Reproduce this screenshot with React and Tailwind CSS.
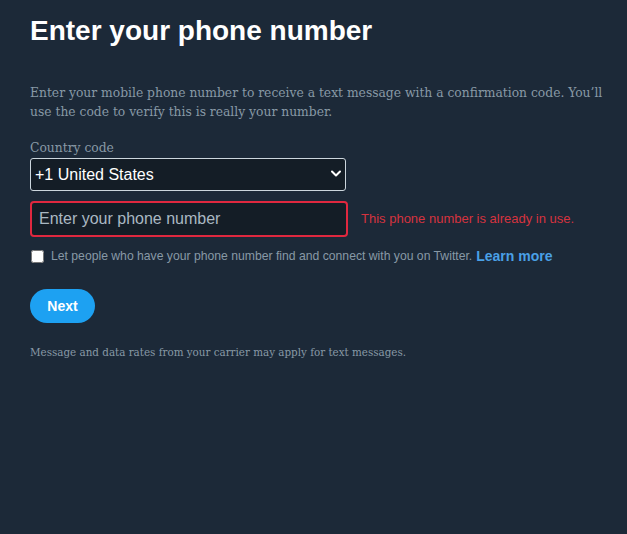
import React, { useState } from 'react';

const App = () => {
  const [country, setCountry] = useState('+1');

  return (
    <div className="min-h-screen w-full bg-[#1c2938] pl-[30px] pr-[16px] pt-[14px] pb-10 font-['Liberation_Sans',Arial,sans-serif]">
      <h1 className="text-[28px] leading-[34px] font-bold text-white">Enter your phone number</h1>

      <p className="mt-[35px] text-[13.7px] leading-[19px] text-[#8899a6] font-['DejaVu_Serif_Condensed','DejaVu_Serif',serif]">
        Enter your mobile phone number to receive a text message with a confirmation code. You’ll use the code to verify this is really your number.
      </p>

      <div className="mt-[17px] w-[316px]">
        <label className="block text-[13.7px] leading-[18px] text-[#8899a6] font-['DejaVu_Serif_Condensed','DejaVu_Serif',serif]">Country code</label>
        <div className="relative mt-[2px]">
          <select
            value={country}
            onChange={(e) => setCountry(e.target.value)}
            className="block w-full h-[33px] appearance-none rounded-[3px] border border-[#ccd6dd] bg-[#141d26] pl-[4px] pr-7 text-[16px] text-white outline-none"
          >
            <option value="+1">+1 United States</option>
            <option value="+44">+44 United Kingdom</option>
            <option value="+81">+81 Japan</option>
          </select>
          <svg className="pointer-events-none absolute right-[5px] top-[12px]" width="10" height="8" viewBox="0 0 10 8">
            <path d="M1 1.5 L5 5.5 L9 1.5" fill="none" stroke="#ffffff" strokeWidth="2" strokeLinecap="round" strokeLinejoin="round" />
          </svg>
        </div>
      </div>

      <div className="mt-[10px] flex items-center gap-[13px]">
        <input
          type="text"
          placeholder="Enter your phone number"
          className="w-[318px] h-[36px] rounded-[4px] border-2 border-[#e0283f] bg-[#141d26] px-[7px] text-[16px] text-white placeholder:text-[#aab8c2] outline-none"
        />
        <span className="text-[13px] text-[#d5333f]">This phone number is already in use.</span>
      </div>

      <div className="mt-[9px] flex items-center">
        <input type="checkbox" className="ml-[1px] h-[13px] w-[13px] accent-white" />
        <span className="ml-[7px] text-[12.2px] text-[#8899a6]">
          Let people who have your phone number find and connect with you on Twitter.
        </span>
        <a href="#" className="ml-[4px] text-[14px] font-bold text-[#4aa0e6]">Learn more</a>
      </div>

      <button className="mt-[22px] h-[34px] w-[65px] rounded-full bg-[#1da1f2] text-[14px] font-bold text-white">
        Next
      </button>

      <p className="mt-[21px] text-[11.5px] text-[#8899a6] font-['DejaVu_Serif_Condensed','DejaVu_Serif',serif]">
        Message and data rates from your carrier may apply for text messages.
      </p>
    </div>
  );
};

export default App;
